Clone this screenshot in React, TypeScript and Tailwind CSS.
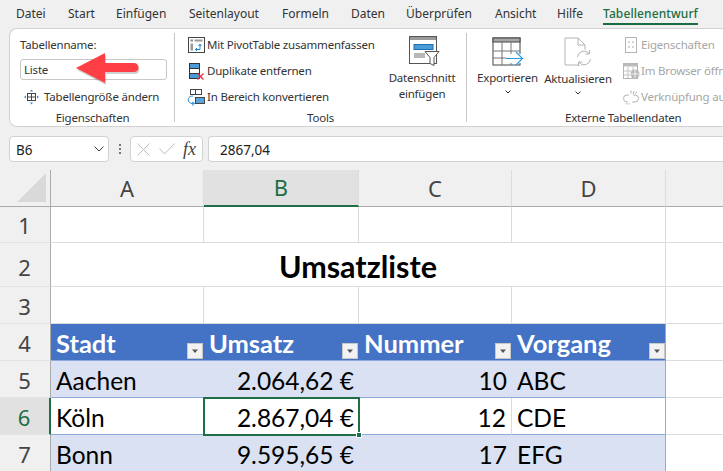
import * as React from "react";

const tabs: [string, string][] = [
  ["Datei", "w-[52px]"],
  ["Start", "w-[48px]"],
  ["Einfügen", "w-[73px]"],
  ["Seitenlayout", "w-[93px]"],
  ["Formeln", "w-[69px]"],
  ["Daten", "w-[55px]"],
  ["Überprüfen", "w-[89px]"],
  ["Ansicht", "w-[62px]"],
  ["Hilfe", "w-[46px]"],
];

function FilterBtn() {
  return (
    <span className="absolute right-[1px] bottom-[1px] w-[16px] h-[16px] bg-[#f2f2f2] border border-[#c8c8c8] flex items-center justify-center">
      <svg width="8" height="5" viewBox="0 0 8 5"><path d="M1 0.5h6L4 4z" fill="#555" /></svg>
    </span>
  );
}

function PivotIcon() {
  return (
    <svg width="17" height="16" viewBox="0 0 17 16" fill="none">
      <rect x="0.5" y="0.5" width="16" height="15" fill="#fff" stroke="#444" />
      <rect x="2.5" y="2.5" width="2.5" height="2" fill="#888" />
      <rect x="6.5" y="2.5" width="8" height="2" fill="#999" />
      <rect x="2.5" y="6.5" width="2.5" height="7" fill="#999" />
      <path d="M7.5 12.5h4.5v-5M10.5 9l1.5-2 1.5 2M9 11l-1.5 1.5L9 14" stroke="#1e88d8" />
    </svg>
  );
}

function DupIcon() {
  return (
    <svg width="17" height="17" viewBox="0 0 17 17" fill="none">
      <rect x="1.5" y="0.5" width="10" height="5" fill="#4a9bd9" stroke="#333" />
      <rect x="1.5" y="5.5" width="10" height="5" fill="#fff" stroke="#333" />
      <rect x="1.5" y="10.5" width="10" height="5" fill="#4a9bd9" stroke="#333" />
      <path d="M9.5 10.5l6 6M15.5 10.5l-6 6" stroke="#e8333c" strokeWidth="1.3" />
    </svg>
  );
}

function ConvertIcon() {
  return (
    <svg width="18" height="17" viewBox="0 0 18 17" fill="none">
      <rect x="3.5" y="0.5" width="5" height="5" fill="#fff" stroke="#444" />
      <rect x="8.5" y="0.5" width="6" height="5" fill="#fff" stroke="#444" />
      <rect x="8.5" y="8.5" width="9" height="6" fill="#5ba4dc" stroke="#444" />
      <path d="M6 7C2 7 0.5 9.5 1.5 12c.8 2 3 3 5.5 2.5M5 13l2.5 1.5L5 16.5" stroke="#1e88d8" />
    </svg>
  );
}

function SlicerIcon() {
  return (
    <svg width="31" height="31" viewBox="0 0 31 31" fill="none">
      <rect x="0.5" y="0.5" width="27" height="27" fill="#fff" stroke="#555" />
      <rect x="1" y="1" width="26" height="3" fill="#9a9a9a" />
      <rect x="5" y="8.5" width="19" height="5" fill="#4a9bd9" stroke="#1d6fb5" />
      <rect x="5" y="17" width="11" height="5" fill="#b8b8b8" />
      <path d="M16 15.5h14l-5 6v8l-4-2v-6z" fill="#fff" stroke="#555" />
    </svg>
  );
}

function ExportIcon() {
  return (
    <svg width="32" height="29" viewBox="0 0 32 29" fill="none">
      <rect x="1" y="1" width="27" height="27" fill="#fff" stroke="#444" />
      <rect x="1" y="1" width="27" height="4" fill="#a8a8a8" stroke="#444" />
      <path d="M10 5v23M19 5v23M1 14h27M1 21h27" stroke="#777" />
      <rect x="14" y="17" width="15" height="9" fill="#fff" />
      <path d="M14 21.5h16M24 15l6.5 6.5L24 28" stroke="#2a9ae0" strokeWidth="1.1" />
    </svg>
  );
}

function RefreshIcon() {
  return (
    <svg width="28" height="30" viewBox="0 0 28 30" fill="none">
      <path d="M1 1h13l7 7v20H1z" fill="#fff" stroke="#b4b4b4" />
      <path d="M14 1v7h7" stroke="#b4b4b4" />
      <circle cx="20" cy="21" r="8.5" fill="#fff" />
      <path d="M13.5 20a6.5 6.5 0 0 1 11.5-3.5M26.5 22a6.5 6.5 0 0 1-11.5 3.5" stroke="#b4b4b4" />
      <path d="M25.5 13v4h-4M14.5 29v-4h4" stroke="#b4b4b4" />
    </svg>
  );
}

function ResizeIcon() {
  return (
    <svg width="15" height="16" viewBox="0 0 15 16" fill="none">
      <rect x="3.5" y="4.5" width="8" height="7" fill="#fff" stroke="#444" />
      <path d="M3.5 8h8M7.5 4.5v7" stroke="#444" />
      <path d="M7.5 0.5l-1.5 2h3zM7.5 15.500l-1.500-2h3zM0 8l2-1.500v3zM15 8l-2-1.500v3z" fill="#2a8fd8" />
    </svg>
  );
}

function Chevron() {
  return (
    <svg className="mt-[4px] shrink-0" width="6" height="4" viewBox="0 0 6 4">
      <path d="M0.5 0.500L3 3l2.500-2.500" stroke="#333" fill="none" />
    </svg>
  );
}

function ToolRow({ icon, label }: { icon: React.ReactNode; label: string }) {
  return (
    <div className="h-[26px] shrink-0 flex items-center">
      <span className="w-[20px] flex justify-center">{icon}</span>
      <span className="ml-[1px]">{label}</span>
    </div>
  );
}

function GrayRow({ icon, label }: { icon: React.ReactNode; label: string }) {
  return (
    <div className="h-[26px] shrink-0 flex items-center text-[#a6a6a6] whitespace-nowrap">
      <span className="w-[20px] flex justify-center">{icon}</span>
      <span>{label}</span>
    </div>
  );
}

function RowHead({ n, active, tall }: { n: number; active?: boolean; tall?: boolean }) {
  return (
    <div className={`flex items-center justify-center pr-[1px] text-[22px] font-['Noto_Sans',sans-serif] border-b border-b-[#e2e2e2] border-r ${tall ? "pt-[5px]" : "pt-[2px]"} ${active ? "bg-[#e1e1e1] text-[#1e6e46] border-r-2 border-r-[#1e6e46]" : "bg-[#f0f0f0] text-[#444] border-r-[#ababab]"}`}>
      {n}
    </div>
  );
}

function ColHead({ c, active }: { c: string; active?: boolean }) {
  return (
    <div className={`flex items-center justify-center text-[22px] font-['Noto_Sans',sans-serif] border-r border-r-[#dcdcdc] ${active ? "bg-[#e1e1e1] text-[#1e6e46] border-b-2 border-b-[#1e6e46]" : "bg-[#f0f0f0] text-[#444] border-b border-b-[#ababab]"}`}>
      {c}
    </div>
  );
}

function Cell({ children, right, band, line }: { children?: React.ReactNode; right?: boolean; band?: boolean; line?: boolean }) {
  return (
    <div className={`flex items-center px-[5px] pt-[4px] text-[24.5px] text-black whitespace-nowrap border-b border-b-[#8ea9db] ${right ? "justify-end" : ""} ${band ? "bg-[#d9e1f2]" : "bg-white"} ${line ? "border-r border-r-[#dcdcdc]" : ""}`}>
      {children}
    </div>
  );
}

function Head({ label }: { label: string }) {
  return (
    <div className="relative flex items-center px-[5px] pt-[2px] text-[25.5px] font-bold text-white bg-[#4472c4] border-b border-b-[#8ea9db] whitespace-nowrap">
      {label}
      <FilterBtn />
    </div>
  );
}

function Blank({ line }: { line?: boolean }) {
  return <div className={`bg-white border-b border-b-[#dcdcdc] ${line ? "border-r border-r-[#dcdcdc]" : ""}`} />;
}

export default function App() {
  return (
    <div className="w-[723px] h-[471px] overflow-hidden bg-[#f0f0f0] font-['Noto_Sans',sans-serif] text-[12px] text-[#333] flex flex-col">
      {/* tabs */}
      <div className="h-[28px] flex items-center pl-[16px] shrink-0">
        {tabs.map(([t, w]) => (
          <span key={t} className={`${w} whitespace-nowrap`}>{t}</span>
        ))}
        <span className="relative h-[28px] flex items-center font-medium tracking-[0.1px] text-[#1b6e44] whitespace-nowrap">
          Tabellenentwurf
          <span className="absolute left-0 right-0 bottom-[3px] h-[2px] bg-[#1b6e44]" />
        </span>
      </div>

      {/* ribbon */}
      <div className="ml-[9px] h-[99px] shrink-0 bg-white border border-r-0 border-[#d2d2d2] rounded-l-[8px] flex overflow-hidden text-[11.5px] tracking-[-0.2px]">
        <div className="w-[164px] shrink-0 flex flex-col pl-[10px] pt-[7px]">
          <div className="h-[18px] shrink-0 flex items-center">Tabellenname:</div>
          <div className="relative mt-[5px] w-[147px] h-[21px] shrink-0 border border-[#c8c8c8] rounded-[3px] flex items-center pl-[3px]">
            Liste
            {/* red arrow placed on top of the input */}
            <svg className="absolute left-[54px] top-[-7px]" width="66" height="34" viewBox="0 0 66 34">
              <path d="M1 15L30 0v10h29a4.500 4.500 0 0 1 0 9H30v11z" fill="#000" opacity="0.18" transform="translate(1 2)" />
              <path d="M1 15L30 0v10h29a4.500 4.500 0 0 1 0 9H30v11z" fill="#ff3f45" />
            </svg>
          </div>
          <div className="mt-[5px] h-[24px] shrink-0 flex items-center pl-[4px]">
            <ResizeIcon />
            <span className="ml-[5px]">Tabellengröße ändern</span>
          </div>
          <div className="mt-[1px] h-[16px] leading-[16px] text-center pr-[9px]">Eigenschaften</div>
        </div>
        <div className="w-px h-[89px] mt-[4px] bg-[#c6c6c6] shrink-0" />

        <div className="w-[291px] shrink-0 flex flex-col">
          <div className="h-[81px] shrink-0 pt-[3px] flex">
            <div className="pl-[11px] w-[220px] flex flex-col whitespace-nowrap">
              <ToolRow icon={<PivotIcon />} label="Mit PivotTable zusammenfassen" />
              <ToolRow icon={<DupIcon />} label="Duplikate entfernen" />
              <ToolRow icon={<ConvertIcon />} label="In Bereich konvertieren" />
            </div>
            <div className="w-[54px] flex flex-col items-center pt-[4px] leading-[16px] whitespace-nowrap">
              <span className="ml-[5px] h-[34px]"><SlicerIcon /></span>
              <span className="mt-[0px]">Datenschnitt</span>
              <span>einfügen</span>
            </div>
          </div>
          <div className="h-[16px] leading-[16px] text-center">Tools</div>
        </div>
        <div className="w-px h-[89px] mt-[4px] bg-[#c6c6c6] shrink-0" />

        <div className="flex-1 flex flex-col min-w-0">
          <div className="h-[81px] shrink-0 flex pt-[3px]">
            <div className="w-[81px] flex flex-col items-center pt-[5px] shrink-0">
              <ExportIcon />
              <span className="mt-[3px] whitespace-nowrap">Exportieren</span>
              <Chevron />
            </div>
            <div className="w-[60px] flex flex-col items-center pt-[5px] shrink-0">
              <RefreshIcon />
              <span className="mt-[3px] whitespace-nowrap">Aktualisieren</span>
              <Chevron />
            </div>
            <div className="flex flex-col ml-[13px]">
              <GrayRow
                label="Eigenschaften"
                icon={
                  <svg width="12" height="16" viewBox="0 0 12 16" fill="none">
                    <rect x="0.5" y="0.500" width="11" height="15" stroke="#b4b4b4" />
                    <path d="M3 5h2M3 10h2M7 5h2M7 10h2" stroke="#aaa" />
                  </svg>
                }
              />
              <GrayRow
                label="Im Browser öffnen"
                icon={
                  <svg width="17" height="16" viewBox="0 0 17 16" fill="none">
                    <rect x="0.5" y="0.500" width="14" height="15" fill="#fff" stroke="#b4b4b4" />
                    <rect x="0.5" y="0.500" width="14" height="3" fill="#bbb" />
                    <path d="M5 4v11M10 4v5M1 8h13M1 12h6" stroke="#c4c4c4" />
                    <circle cx="12" cy="11" r="4.500" fill="#b8b8b8" />
                    <path d="M8 11h8M12 7v8" stroke="#fff" strokeWidth="0.8" />
                  </svg>
                }
              />
              <GrayRow
                label="Verknüpfung aufheben"
                icon={
                  <svg width="17" height="15" viewBox="0 0 17 15" fill="none" stroke="#b4b4b4">
                    <path d="M6 5H4a3.500 3.500 0 0 0 0 7h1M9 12h3a3.500 3.500 0 0 0 0-7h-2" />
                    <path d="M8 0.500v3M11 1l-1 3M14 2l-2 2M3 13l1 1.500M6 13v1.500" />
                  </svg>
                }
              />
            </div>
          </div>
          <div className="h-[16px] leading-[16px] ml-[98px] whitespace-nowrap">Externe Tabellendaten</div>
        </div>
      </div>

      {/* formula bar */}
      <div className="mt-[9px] h-[26px] shrink-0 flex items-stretch pl-[9px] text-[13.5px]">
        <div className="w-[100px] bg-white border border-[#d2d2d2] rounded-[4px] flex items-center justify-between pl-[6px] pr-[4px]">
          <span className="text-[#222] pt-[2px]">B6</span>
          <svg width="10" height="6" viewBox="0 0 10 6"><path d="M0.500 0.500L5 5l4.500-4.500" stroke="#444" fill="none" /></svg>
        </div>
        <div className="w-[21px] flex flex-col items-center justify-center gap-[2px]">
          <span className="w-[2px] h-[2px] bg-[#777]" />
          <span className="w-[2px] h-[2px] bg-[#777]" />
          <span className="w-[2px] h-[2px] bg-[#777]" />
        </div>
        <div className="w-[73px] bg-white border border-[#d2d2d2] rounded-[4px] flex items-center pl-[6px]">
          <svg width="13" height="13" viewBox="0 0 13 13"><path d="M0.500 0.500l12 12M12.500 0.500l-12 12" stroke="#bdbdbd" fill="none" /></svg>
          <svg className="ml-[9px]" width="16" height="12" viewBox="0 0 16 12"><path d="M0.500 5.500L5.500 11 15.500 0.500" stroke="#bdbdbd" fill="none" /></svg>
          <span className="ml-[8px] font-['Liberation_Serif',serif] italic text-[18px] text-[#444]">fx</span>
        </div>
        <div className="ml-[5px] flex-1 bg-white border border-r-0 border-[#d2d2d2] rounded-l-[4px] flex items-center pl-[11px] pt-[2px] text-[#222]">
          2867,04
        </div>
      </div>

      {/* sheet */}
      <div className="mt-[8px] flex-1 relative grid grid-cols-[51px_153px_155px_153px_154px_1fr] grid-rows-[37px_36px_44px_37px_37px_37px_37px_37px] font-['Lato',sans-serif]">
        <div className="bg-[#f0f0f0] border-r border-r-[#ababab] border-b border-b-[#ababab] flex items-end justify-end pr-[3px] pb-[3px]">
          <svg width="30" height="30" viewBox="0 0 30 30"><path d="M29 0v29H0z" fill="#d9d9d9" /></svg>
        </div>
        <ColHead c="A" />
        <ColHead c="B" active />
        <ColHead c="C" />
        <ColHead c="D" />
        <div className="bg-[#f0f0f0] border-b border-b-[#ababab]" />

        <RowHead n={1} />
        <Blank line /><Blank line /><Blank line /><Blank line /><Blank />

        <RowHead n={2} tall />
        <div className="col-span-4 bg-white pt-[5px] border-b border-b-[#dcdcdc] border-r border-r-[#dcdcdc] flex items-center justify-center text-[30.5px] font-bold text-black">
          Umsatzliste
        </div>
        <Blank />

        <RowHead n={3} />
        <Blank line /><Blank line /><Blank line /><Blank line /><Blank />

        <RowHead n={4} />
        <Head label="Stadt" /><Head label="Umsatz" /><Head label="Nummer" /><Head label="Vorgang" />
        <Blank />

        <RowHead n={5} />
        <Cell band>Aachen</Cell>
        <Cell band right>2.064,62 €</Cell>
        <Cell band right>10</Cell>
        <Cell band>ABC</Cell>
        <Blank />

        <RowHead n={6} active />
        <Cell>Köln</Cell>
        <Cell right>2.867,04 €</Cell>
        <Cell right line>12</Cell>
        <Cell>CDE</Cell>
        <Blank />

        <RowHead n={7} />
        <Cell band>Bonn</Cell>
        <Cell band right>9.595,65 €</Cell>
        <Cell band right>17</Cell>
        <Cell band>EFG</Cell>
        <Blank />

        {/* active cell outline + table edge lie over the grid */}
        <div className="absolute left-[203px] top-[227px] w-[157px] h-[39px] border-2 border-[#1e6e46] pointer-events-none">
          <span className="absolute right-[-4px] bottom-[-4px] w-[6px] h-[6px] bg-[#1e6e46] border border-white" />
        </div>
        <div className="absolute left-[665px] top-[154px] w-px h-[160px] bg-[#8ea9db]" />
      </div>
    </div>
  );
}
